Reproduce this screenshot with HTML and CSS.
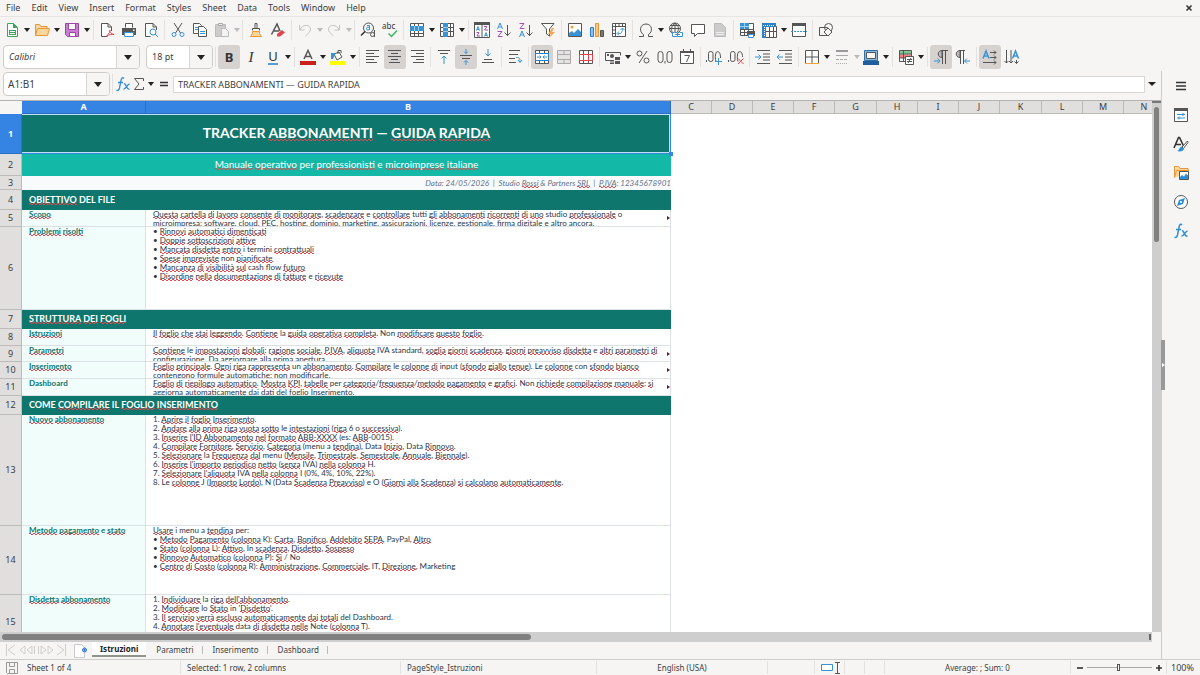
FILE: index.html
```html
<!DOCTYPE html>
<html lang="en">
<head>
<meta charset="utf-8">
<title>Tracker Abbonamenti</title>
<link rel="stylesheet" href="styles.css">
</head>
<body>
<nav class="menubar">
  <button>File</button><button>Edit</button><button>View</button><button>Insert</button><button>Format</button><button>Styles</button><button>Sheet</button><button>Data</button><button>Tools</button><button>Window</button><button>Help</button>
  <button class="close" aria-label="Close document"><svg viewBox="0 0 8 8"><path class="k2" d="M1.5 1.5l5 5M6.500 1.500l-5 5"/></svg></button>
</nav>

<div class="toolbar" role="toolbar" aria-label="Standard">
  <button aria-label="New"><svg viewBox="0 0 16 16"><path fill="#fff" stroke="#3fa35b" d="M3.500 1.500h6l4 4v9h-10z"/><path fill="#3fa35b" d="M9 1v5h5zM5 8h7v5H5z"/><path stroke="#fff" d="M6 9.500h5M6 11.500h5"/></svg></button><button class="drop" aria-label="New options"></button>
  <button aria-label="Open"><svg viewBox="0 0 16 16"><path fill="#fbd69a" stroke="#e8963a" d="M1.500 13.500v-11h4l1.500 2h6v2.500M1.500 13.500l2-7h12l-2 7z"/></svg></button><button class="drop" aria-label="Open recent"></button>
  <button aria-label="Save"><svg viewBox="0 0 16 16"><path fill="#c77fd0" stroke="#9a45a6" d="M1.500 1.500h13v13h-11l-2-2z"/><path fill="#fff" stroke="#9a45a6" d="M4.500 1.500h7v6h-7zM5.500 10.500h6v4h-6z"/></svg></button><button class="drop" aria-label="Save options"></button>
  <span class="sep"></span>
  <button aria-label="Export as PDF"><svg viewBox="0 0 16 16"><path fill="#fff" class="k" d="M12.500 9V5l-3.500-3.500H2.500v13h6M9 1.500V5h3.500"/><path class="r" d="M7.500 14c3-2 4-6 3.500-6s-1 3 4 4.500c-2-.5-5 0-7.500 1.500"/></svg></button>
  <button aria-label="Print"><svg viewBox="0 0 16 16"><path fill="#555" d="M1 6h14v7H1z"/><path class="k" fill="#fff" d="M4.500 5.500v-4h7v4"/><path stroke="#3a93d4" fill="#fff" d="M3.500 10.500h9v4h-9z"/><path fill="#fff" d="M12 7.500h1.500V9H12z"/></svg></button>
  <button aria-label="Print Preview"><svg viewBox="0 0 16 16"><path fill="#fff" class="k" d="M13.500 8V5L10 1.500H2.500v13h5M10 1.500V5h3.500"/><circle class="b" cx="10" cy="10" r="3"/><path class="b" d="M12 12l3 3"/></svg></button>
  <span class="sep"></span>
  <button aria-label="Cut"><svg viewBox="0 0 16 16"><path class="k" d="M4 1l6.500 10M12 1L5.500 11"/><circle class="b" cx="4" cy="12.500" r="2"/><circle class="b" cx="12" cy="12.500" r="2"/></svg></button>
  <button aria-label="Copy"><svg viewBox="0 0 16 16"><path fill="#fff" class="k" d="M1.500 1.500h6l2 2v8h-8z"/><path fill="#fff" class="k" d="M6.500 4.500h5l3 3v7h-8z"/><path class="b" d="M3 5.500h3M3 7.500h3M8 9.500h5M8 11.500h5"/></svg></button>
  <button aria-label="Paste" disabled><svg viewBox="0 0 16 16"><path fill="#ccc" stroke="#bbb" d="M1.500 2.500h10v12h-10z"/><path stroke="#aaa" fill="#eee" d="M4.500 1.500h4v2h-4z"/><path fill="#f4f4f4" stroke="#bbb" d="M7.500 6.500h4l3 3v5h-7z"/></svg></button><button class="drop dim" aria-label="Paste options" disabled></button>
  <span class="sep"></span>
  <button aria-label="Clone Formatting"><svg viewBox="0 0 16 16"><path class="k" fill="#fff" d="M7 6.500V1.500h2v5M4.500 8.500v-2h7v2"/><path fill="#fbd69a" stroke="#e8963a" d="M4.500 9.500h7v2l2 3h-11l2-3z"/></svg></button>
  <button aria-label="Clear Direct Formatting"><svg viewBox="0 0 16 16"><path class="k" stroke-width="1.500" d="M1.500 12.500L7 2l3 7M4 9h5"/><path fill="#e0454b" d="M7 12l5-4 3 2.500-5 4-3 0z"/></svg></button>
  <span class="sep"></span>
  <button aria-label="Undo" disabled><svg viewBox="0 0 16 16"><path class="g" d="M2.500 3v5h5M3 8c2-6 10-6 10.500-1 0 3-2 4-5 7"/></svg></button><button class="drop dim" aria-label="Undo list" disabled></button>
  <button aria-label="Redo" disabled><svg viewBox="0 0 16 16"><path class="g" d="M13.500 3v5h-5M13 8C11 2 3 2 2.500 7c0 3 2 4 5 7"/></svg></button><button class="drop dim" aria-label="Redo list" disabled></button>
  <span class="sep"></span>
  <button aria-label="Find and Replace"><svg viewBox="0 0 16 16"><circle class="k" cx="8.500" cy="6" r="5"/><path class="k2" d="M5 9.500L1 13.500"/><circle class="b" cx="8" cy="6.500" r="1.500"/><path class="b" d="M7 3.500h2.500V8"/><circle class="k" cx="12.500" cy="12.500" r="2" fill="#f6f5f4"/><path class="k" d="M14.500 8v7"/></svg></button>
  <button aria-label="Spelling"><svg viewBox="0 0 16 16"><text class="tk" x="0" y="7">abc</text><path stroke="#3fb568" stroke-width="1.500" fill="none" d="M6.500 11.500l3 3 5.500-6"/></svg></button>
  <span class="sep"></span>
  <button aria-label="Row"><svg viewBox="0 0 16 16"><path fill="#fff" class="k" d="M1.500 1.500h13v13h-13zM5.500 1v13M9.500 1v13M1 11.500h14"/><path fill="#3a93d4" d="M1 4h14v5H1z"/><path stroke="#9cd0f0" d="M5.500 4v5M9.500 4v5"/></svg></button><button class="drop" aria-label="Row options"></button>
  <button aria-label="Column"><svg viewBox="0 0 16 16"><path fill="#fff" class="k" d="M1.500 1.500h13v13h-13zM1 5.500h14M1 9.500h14M11.500 1v14"/><path fill="#3a93d4" d="M4 1h5v14H4z"/><path stroke="#9cd0f0" d="M4 5.500h5M4 9.500h5"/></svg></button><button class="drop" aria-label="Column options"></button>
  <span class="sep"></span>
  <button aria-label="Sort"><svg viewBox="0 0 16 16"><path fill="#fff" class="k" d="M.5 1.500h15v14H.5zM8 2v13"/><path fill="#555" d="M0 0h16v3H0z"/><path class="b" d="M2.500 8.500l1.500-4 1.500 4M3 7.500h2M10.500 14.500l1.500-4 1.500 4M11 13.500h2"/><path class="p" d="M2.500 10.500H5L3 14h3M10 4.500h3L10.500 8H14"/></svg></button>
  <button aria-label="Sort Ascending"><svg viewBox="0 0 16 16"><path class="b" d="M1.500 7L4 1l2.500 6M2.500 5h3"/><path class="p" d="M1.500 9.500H6L2 14.500h4.500"/><path class="k" d="M11.500 3v11M8.500 10.500l3 3 3-3"/></svg></button>
  <button aria-label="Sort Descending"><svg viewBox="0 0 16 16"><path class="b" d="M1.500 15L4 9l2.500 6M2.500 13h3"/><path class="p" d="M1.500 1.500H6L2 6.500h4.500"/><path class="k" d="M11.500 3v11M8.500 10.500l3 3 3-3"/></svg></button>
  <button aria-label="AutoFilter"><svg viewBox="0 0 16 16"><path class="k" fill="#fff" d="M1.500 1.500h12.500L9.500 7v7L6.500 12V7z"/><path fill="#f3a64c" d="M12 6l-4 6h3l-2 4 6-6h-3l2-4z"/></svg></button>
  <span class="sep"></span>
  <button aria-label="Insert Image"><svg viewBox="0 0 16 16"><path fill="#fff" class="k" d="M1.500 1.500h13v13h-13z"/><circle fill="#f0a33c" cx="5" cy="5" r="1.500"/><path fill="#3a93d4" d="M2 14v-3l3-2 2 2 4-4 3 3v4z"/></svg></button>
  <button aria-label="Insert Chart"><svg viewBox="0 0 16 16"><path fill="#8cc4ee" stroke="#2f7fc4" d="M1.500 5.500h3v9h-3z"/><path fill="#fbc67c" stroke="#e8963a" d="M6.500 1.500h3v13h-3z"/><path fill="#777" stroke="#555" d="M11.500 8.500h3v6h-3z"/></svg></button>
  <button aria-label="Insert Pivot Table"><svg viewBox="0 0 16 16"><path fill="#fff" class="k" d="M1.500 1.500h13v13h-13zM1.500 4.500h13M4.500 1.500v13M8 1.500v3M11.500 1.500v3M1.500 8h3M1.500 11.500h3"/><path class="b" d="M6.500 11.500c4 1 5-2 5-5M9.500 8l2-2 2 2M8 9.500l-2 2 2 2"/></svg></button>
  <span class="sep"></span>
  <button aria-label="Special Character"><svg viewBox="0 0 16 16"><path class="k" d="M1 14.500h4.500v-2C1 10 1.500 2 8 2s7 8 2.500 10.500v2H15"/></svg></button><button class="drop" aria-label="Special characters"></button>
  <button aria-label="Insert Hyperlink"><svg viewBox="0 0 16 16"><circle class="k" cx="7" cy="6.500" r="5.500"/><path class="k" d="M1.500 6.500h11M7 1v11M2.500 3.500h9M4.500 11c-1.500-3-1.500-7 2.500-10 4 3 4 6 2.500 9"/><path class="b" fill="#fff" d="M6.500 10.500h3v4h-5v-4zM11.500 10.500h3v4h-5M7 12.500h5"/></svg></button>
  <button aria-label="Insert Comment"><svg viewBox="0 0 16 16"><path class="k" fill="#fff" d="M1.500 2.500h13v9h-7l-3 3v-3h-3z"/></svg></button>
  <button aria-label="Headers and Footers" disabled><svg viewBox="0 0 16 16"><path fill="#ccc" stroke="#bbb" d="M2.500 1.500h7l4 4v9h-11z"/><path stroke="#eee" d="M4 10.500h8M4 12.500h8"/></svg></button>
  <span class="sep"></span>
  <button aria-label="Define Print Area"><svg viewBox="0 0 16 16"><path fill="#fff" class="k" d="M1.500 1.500h13v12h-13zM1 7.500h13M1 10.500h13M5.500 1v13M9.500 1v13"/><path fill="#3a93d4" d="M1 1h9v6H1z"/><path stroke="#9cd0f0" d="M1 4.500h9M5.500 1v6"/><path fill="#555" d="M8 9h8v5H8z"/><path fill="#fff" stroke="#3a93d4" d="M9.500 12.500h5v3h-5z"/></svg></button>
  <button aria-label="Freeze Rows and Columns"><svg viewBox="0 0 16 16"><path fill="#fff" class="k" d="M4.500 4.500h11v11h-11zM4 9.500h12M8.500 4v12M12.500 4v12"/><path fill="#2f7fc4" d="M1 1h14v4H5v11H1z"/><path stroke="#fff" stroke-dasharray="1 1" d="M2 3.500h12M3.500 5v10"/></svg></button><button class="drop" aria-label="Freeze options"></button>
  <button aria-label="Split Window"><svg viewBox="0 0 16 16"><path fill="#fff" class="k" d="M1.500 1.500h13v13h-13z"/><path fill="#555" d="M1 1h14v3H1z"/><path class="b" stroke-dasharray="2 1" d="M0 9.500h16"/></svg></button>
  <span class="sep"></span>
  <button aria-label="Show Draw Functions"><svg viewBox="0 0 16 16"><path class="k" d="M1.500 5.500h8v8h-8z"/><circle class="k" cx="10.500" cy="5.500" r="4"/><path class="k" fill="#f6f5f4" d="M10 6l4 4-4 4-4-4z"/></svg></button>
</div>

<div class="toolbar formatting" role="toolbar" aria-label="Formatting">
  <div class="combo font"><input type="text" value="Calibri" aria-label="Font name"><button aria-label="Font list"></button></div>
  <div class="combo size"><input type="text" value="18 pt" aria-label="Font size"><button aria-label="Size list"></button></div>
  <span class="sep"></span>
  <button class="on letter" aria-label="Bold"><b>B</b></button>
  <button class="letter" aria-label="Italic"><i>I</i></button>
  <button class="letter" aria-label="Underline"><span class="under">U</span></button><button class="drop" aria-label="Underline options"></button>
  <span class="sep"></span>
  <button aria-label="Font Color"><svg viewBox="0 0 16 16"><path class="k" stroke-width="1.500" d="M4 10L8 1.500 12 10M5.500 7.500h5"/><path fill="#c9211e" d="M0 12h16v4H0z"/></svg></button><button class="drop" aria-label="Font color options"></button>
  <button aria-label="Background Color"><svg viewBox="0 0 16 16"><path fill="#fff" class="k" d="M4 5l5-2 3 5-5 3zM8 5V1.500h3V4"/><path fill="#3a93d4" d="M1 4h4v2L3 10H1z"/><path fill="#ff0" d="M0 12h16v4H0z"/></svg></button><button class="drop" aria-label="Background color options"></button>
  <span class="sep"></span>
  <button aria-label="Align Left"><svg viewBox="0 0 16 16"><path class="k" d="M1 1.500h13M1 4.500h8M1 7.500h13M1 10.500h8M1 13.500h11"/></svg></button>
  <button class="on" aria-label="Center Horizontally"><svg viewBox="0 0 16 16"><path class="k" d="M1 1.500h13M4 4.500h7M1 7.500h13M4 10.500h7M2 13.500h11"/></svg></button>
  <button aria-label="Align Right"><svg viewBox="0 0 16 16"><path class="k" d="M2 1.500h13M7 4.500h8M2 7.500h13M7 10.500h8M4 13.500h11"/></svg></button>
  <span class="sep"></span>
  <button aria-label="Align Top"><svg viewBox="0 0 16 16"><path class="k" d="M2 1.500h12M4 4.500h8"/><path class="b" d="M8 15V8M5.500 9.500L8 7l2.500 2.500"/></svg></button>
  <button class="on" aria-label="Center Vertically"><svg viewBox="0 0 16 16"><path class="k" d="M2 6.500h12M4 9.500h8"/><path class="b" d="M8 0v4.500M6 2.500l2 2 2-2M8 16v-4.500M6 13.500l2-2 2 2"/></svg></button>
  <button aria-label="Align Bottom"><svg viewBox="0 0 16 16"><path class="k" d="M4 10.500h8M2 13.500h12"/><path class="b" d="M8 0v6.500M5.500 4.500L8 7l2.500-2.500"/></svg></button>
  <span class="sep"></span>
  <button aria-label="Wrap Text"><svg viewBox="0 0 16 16"><path class="k" d="M2 1.500h11M2 5.500h9M2 9.500h6M2 13.500h7"/><path class="b" d="M9 8.500c4 0 4 1 4 4.500M11 11l2 2.500L15 11"/></svg></button>
  <span class="sep"></span>
  <button class="on" aria-label="Merge and Center Cells"><svg viewBox="0 0 16 16"><path class="k" fill="#fff" d="M1.500 1.500h13v13h-13zM1 4.500h14M1 11.500h14M5.500 1v14M10.500 1v14"/><path fill="#fff" stroke="#2f7fc4" d="M1.500 4.500h13v7h-13z"/><path class="b" d="M3 8h4M9 8h4M5.500 6.500L7 8 5.500 9.500M10.500 6.500L9 8l1.500 1.500"/></svg></button>
  <button aria-label="Merge Cells" disabled><svg viewBox="0 0 16 16"><path stroke="#aaa" fill="#e4e4e4" d="M1.500 1.500h13v13h-13zM1 5.500h14M1 10.500h14M8 1v4M8 11v4"/></svg></button>
  <button aria-label="Split Cells"><svg viewBox="0 0 16 16"><path class="k" fill="#fff" d="M1.500 1.500h13v13h-13zM5.500 1v14M10.500 1v14"/><path class="r" fill="none" d="M1.500 5.500h13v6h-13zM5.500 6v5M10.500 6v5"/></svg></button>
  <span class="sep"></span>
  <button aria-label="Format as Currency"><svg viewBox="0 0 16 16"><path class="k" d="M8 11.500H.5v-8h15v3"/><circle fill="#555" cx="7" cy="7" r="2"/><path fill="#555" d="M5 11h4v4H5zM10 8h5v7h-5zM2 5h2v2H2z"/><path stroke="#f6f5f4" d="M9.500 8v7M10 11.500h5M5 13h4"/></svg></button><button class="drop" aria-label="Currency options"></button>
  <button aria-label="Format as Percent"><svg viewBox="0 0 16 16"><circle class="k" cx="4.500" cy="4.500" r="2.500"/><circle class="k" cx="11.500" cy="11.500" r="2.500"/><path class="k" d="M12 2L4 14"/></svg></button>
  <button aria-label="Format as Number"><svg viewBox="0 0 16 16"><rect class="k" x="1" y="2.500" width="5" height="11" rx="2.500"/><rect class="k" x="10" y="2.500" width="5" height="11" rx="2.500"/><path class="k" d="M8 12v2.500"/></svg></button>
  <button aria-label="Format as Date"><svg viewBox="0 0 16 16"><path class="k" fill="#fff" d="M1.500 2.500h13v12h-13zM4.500 0v3M11.500 0v3"/><path fill="#555" d="M1 2h14v2H1z"/><path class="k" d="M5.500 6.500h5L7.500 13"/></svg></button>
  <span class="sep"></span>
  <button aria-label="Add Decimal Place"><svg viewBox="0 0 16 16"><rect class="k" x="2.500" y="2.500" width="4.500" height="10" rx="2"/><path class="k" d="M.5 11v2M10 12.500c-1-2-1-8 .5-9.500 2-1 4 0 4 6"/><path class="b" d="M9 12.500h7M12.500 9v7"/></svg></button>
  <button aria-label="Delete Decimal Place"><svg viewBox="0 0 16 16"><rect class="k" x="2.500" y="2.500" width="4.500" height="10" rx="2"/><path class="k" d="M.5 11v2M10 12.500c-1-2-1-8 .5-9.500 2-1 4 0 4 5"/><path class="r" d="M10 9.500l5.500 5.500M15.500 9.500L10 15"/></svg></button>
  <span class="sep"></span>
  <button aria-label="Increase Indent"><svg viewBox="0 0 16 16"><path class="k" d="M2 1.500h13M8 5h7M8 8h7M8 11h7M2 14.500h13"/><path class="b" d="M0 8h6M3.500 5.500L6 8l-2.500 2.500"/></svg></button>
  <button aria-label="Decrease Indent"><svg viewBox="0 0 16 16"><path class="k" d="M2 1.500h13M8 5h7M8 8h7M8 11h7M2 14.500h13"/><path class="b" d="M0 8h6M2.500 5.500L0 8l2.500 2.500"/></svg></button>
  <span class="sep"></span>
  <button aria-label="Borders"><svg viewBox="0 0 16 16"><path class="k" fill="#fff" d="M1.500 14.500v-13h13v13M8 1.500v13M1.500 8h13"/><path stroke="#f0a33c" d="M1 14.500h14"/></svg></button><button class="drop" aria-label="Border options"></button>
  <button aria-label="Border Style" disabled><svg viewBox="0 0 16 16"><path stroke="#999" stroke-width="2" d="M2 2h12"/><path stroke="#aaa" d="M2 6.500h12"/><path stroke="#aaa" stroke-dasharray="3 1" d="M2 10.500h12"/><path stroke="#aaa" stroke-dasharray="1 1" d="M2 14.500h12"/></svg></button><button class="drop dim" aria-label="Border style options" disabled></button>
  <button aria-label="Border Color"><svg viewBox="0 0 16 16"><path fill="#8ab8dc" stroke="#2f6fa8" d="M1.500 1.500h13v10h-13z"/><path fill="#f6f5f4" class="k" d="M3.500 3.500h9v6h-9z"/><path fill="#1f5f9f" d="M0 12h16v4H0z"/></svg></button><button class="drop" aria-label="Border color options"></button>
  <span class="sep"></span>
  <button aria-label="Conditional Formatting"><svg viewBox="0 0 16 16"><path fill="#fff" class="k" d="M1.500 1.500h12v11h-12z"/><path fill="#7fc894" d="M2 2h11v3H2z"/><path fill="#ee8080" d="M2 5.500h11V9H2z"/><path class="k" d="M5.500 1.500v11M1.500 5h12M1.500 9h12"/><path fill="#fff" class="k" d="M7.500 7.500h8v8h-8zM9 10.500h5M9 12.500h5M13 9l-3 5"/></svg></button><button class="drop" aria-label="Conditional options"></button>
  <span class="sep"></span>
  <button class="on" aria-label="Left-To-Right"><svg viewBox="0 0 16 16"><path fill="#bbb" class="k" d="M9 8.500C4 8.500 4 1.500 9 1.500z"/><path class="k" d="M15 1.500H8.500M9.500 1.500V15M12.500 1.500V15"/><path class="b" d="M1 12h5.500M4.500 9.500L7 12l-2.500 2.500"/></svg></button>
  <button aria-label="Right-To-Left"><svg viewBox="0 0 16 16"><path fill="#bbb" class="k" d="M5 8.500C0 8.500 0 1.500 5 1.500z"/><path class="k" d="M10 1.500H4.500M5.500 1.500V15M8.500 1.500V15"/><path class="b" d="M9.500 12H15M12 9.500L9.500 12l2.500 2.500"/></svg></button>
  <span class="sep"></span>
  <button class="on" aria-label="Text direction left to right"><svg viewBox="0 0 16 16"><path class="b" stroke-width="1.500" d="M1 9.500L4 2l3 7.500M2 7h4"/><path class="k" d="M8 3.500h6M12 1.500l2 2-2 2M8 8.500h6M12 6.500l2 2-2 2M1 13.500h13M12 11.500l2 2-2 2"/></svg></button>
  <button aria-label="Text direction top to bottom"><svg viewBox="0 0 16 16"><path class="b" stroke-width="1.500" d="M8.500 9.500l3-7.500 3 7.500M9.500 7h4"/><path class="k" d="M2.500 1v13M.5 12l2 2 2-2M7 1v13M5 12l2 2 2-2M12.500 11v3.500M10.500 12.500l2 2 2-2"/></svg></button>
</div>

<div class="workspace">
  <main class="document">
    <div class="formulabar">
      <div class="combo name"><input type="text" value="A1:B1" aria-label="Name box"><button aria-label="Named ranges"></button></div>
      <span class="sep"></span>
      <button class="fx" aria-label="Function Wizard"><svg viewBox="0 0 16 16"><path stroke="#2f8fd4" stroke-width="1.300" fill="none" d="M9 2.500C7.500 1 6.500 2 6 4.500L4.500 12c-.5 2-1.500 3-3 2M3 6.500h5M9 8c2-1.500 2 6 5.500 5M14.500 8c-2 0-4 5.500-6 5"/></svg></button>
      <button class="sigma" aria-label="Select Function"><svg viewBox="0 0 12 16"><path class="k" d="M10.500 5V2.500h-9L6 8l-4.500 5.500h9V11"/></svg></button>
      <button class="drop" aria-label="Function options"></button>
      <button class="equals" aria-label="Formula"><svg viewBox="0 0 10 16"><path class="k2" d="M1 6.500h8M1 9.500h8"/></svg></button>
      <input class="formula" type="text" value="TRACKER ABBONAMENTI — GUIDA RAPIDA" aria-label="Input line">
      <button class="drop expand" aria-label="Expand Formula Bar"></button>
    </div>

    <div class="grid">
      <div class="cells">
        <table>
          <colgroup><col class="c-head"><col class="c-a"><col class="c-b"><col class="c-n" span="4"><col class="c-w"><col class="c-n" span="3"><col class="c-w"><col class="c-n" span="3"></colgroup>
          <thead><tr><td class="corner"></td><th class="sel">A</th><th class="sel">B</th><th>C</th><th>D</th><th>E</th><th>F</th><th>G</th><th>H</th><th>I</th><th>J</th><th>K</th><th>L</th><th>M</th><th>N</th></tr></thead>
          <tbody>
            <tr style="height:40px"><th class="sel">1</th><td colspan="2" class="title">TRACKER <u>ABBONAMENTI</u> — <u>GUIDA</u> <u>RAPIDA</u></td><td colspan="12"></td></tr>
            <tr style="height:22px"><th>2</th><td colspan="2" class="subtitle"><u>Manuale</u> <u>operativo</u> per <u>professionisti</u> e <u>microimprese</u> <u>italiane</u></td><td colspan="12"></td></tr>
            <tr style="height:14px"><th>3</th><td colspan="2" class="meta">Data: 24/05/2026 &nbsp;|&nbsp; Studio <u>Rossi</u> &amp; Partners <u>SRL</u> &nbsp;|&nbsp; <u>P.IVA</u>: 12345678901</td><td colspan="12"></td></tr>
            <tr style="height:20px"><th>4</th><td colspan="2" class="section"><u>OBIETTIVO</u> DEL FILE</td><td colspan="12"></td></tr>
            <tr style="height:17px"><th>5</th><td class="key"><u>Scopo</u></td><td class="val more"><div style="height:16px"><u>Questa</u> <u>cartella</u> <u>di</u> <u>lavoro</u> <u>consente</u> <u>di</u> <u>monitorare</u>, <u>scadenzare</u> e <u>controllare</u> tutti <u>gli</u> <u>abbonamenti</u> <u>ricorrenti</u> <u>di</u> <u>uno</u> studio <u>professionale</u> o<br>microimpresa: software, cloud, PEC, hosting, dominio, marketing, assicurazioni, licenze, gestionale, firma digitale e altro ancora.</div></td><td colspan="12"></td></tr>
            <tr style="height:83px"><th>6</th><td class="key"><u>Problemi</u> <u>risolti</u></td><td class="val"><div>• <u>Rinnovi</u> <u>automatici</u> <u>dimenticati</u><br>• <u>Doppie</u> <u>sottoscrizioni</u> <u>attive</u><br>• <u>Mancata</u> <u>disdetta</u> <u>entro</u> i termini <u>contrattuali</u><br>• <u>Spese</u> <u>impreviste</u> non <u>pianificate</u><br>• <u>Mancanza</u> <u>di</u> <u>visibilità</u> <u>sul</u> cash flow <u>futuro</u><br>• <u>Disordine</u> <u>nella</u> <u>documentazione</u> <u>di</u> <u>fatture</u> e <u>ricevute</u></div></td><td colspan="12"></td></tr>
            <tr style="height:19px"><th>7</th><td colspan="2" class="section"><u>STRUTTURA</u> <u>DEI</u> <u>FOGLI</u></td><td colspan="12"></td></tr>
            <tr style="height:17px"><th>8</th><td class="key"><u>Istruzioni</u></td><td class="val"><div><u>Il</u> <u>foglio</u> <u>che</u> <u>stai</u> <u>leggendo</u>. <u>Contiene</u> la <u>guida</u> <u>operativa</u> <u>completa</u>. Non <u>modificare</u> <u>questo</u> <u>foglio</u>.</div></td><td colspan="12"></td></tr>
            <tr style="height:16px"><th>9</th><td class="key"><u>Parametri</u></td><td class="val more"><div style="height:15px"><u>Contiene</u> le <u>impostazioni</u> <u>globali</u>: <u>ragione</u> <u>sociale</u>, <u>P.IVA</u>, <u>aliquota</u> IVA standard, <u>soglia</u> <u>giorni</u> <u>scadenza</u>, <u>giorni</u> <u>preavviso</u> <u>disdetta</u> e <u>altri</u> <u>parametri</u> <u>di</u><br>configurazione. Da aggiornare alla prima apertura.</div></td><td colspan="12"></td></tr>
            <tr style="height:17px"><th>10</th><td class="key"><u>Inserimento</u></td><td class="val more"><div style="height:16px"><u>Foglio</u> <u>principale</u>. <u>Ogni</u> <u>riga</u> <u>rappresenta</u> un <u>abbonamento</u>. <u>Compilare</u> le <u>colonne</u> <u>di</u> input (<u>sfondo</u> <u>giallo</u> <u>tenue</u>). Le <u>colonne</u> con <u>sfondo</u> <u>bianco</u><br>contengono formule automatiche: non modificarle.</div></td><td colspan="12"></td></tr>
            <tr style="height:17px"><th>11</th><td class="key">Dashboard</td><td class="val more"><div style="height:16px"><u>Foglio</u> <u>di</u> <u>riepilogo</u> <u>automatico</u>. <u>Mostra</u> <u>KPI</u>, <u>tabelle</u> per <u>categoria</u>/<u>frequenza</u>/<u>metodo</u> <u>pagamento</u> e <u>grafici</u>. Non <u>richiede</u> <u>compilazione</u> <u>manuale</u>: <u>si</u><br>aggiorna automaticamente dai dati del foglio Inserimento.</div></td><td colspan="12"></td></tr>
            <tr style="height:19px"><th>12</th><td colspan="2" class="section">COME <u>COMPILARE</u> IL <u>FOGLIO</u> <u>INSERIMENTO</u></td><td colspan="12"></td></tr>
            <tr style="height:111px"><th>13</th><td class="key"><u>Nuovo</u> <u>abbonamento</u></td><td class="val"><div>1. <u>Aprire</u> <u>il</u> <u>foglio</u> <u>Inserimento</u>.<br>2. <u>Andare</u> <u>alla</u> <u>prima</u> <u>riga</u> <u>vuota</u> <u>sotto</u> le <u>intestazioni</u> (<u>riga</u> 6 o <u>successiva</u>).<br>3. <u>Inserire</u> <u>l'ID</u> <u>Abbonamento</u> <u>nel</u> <u>formato</u> <u>ABB-XXXX</u> (es: <u>ABB</u>-0015).<br>4. <u>Compilare</u> <u>Fornitore</u>, <u>Servizio</u>, <u>Categoria</u> (menu a <u>tendina</u>), Data <u>Inizio</u>, Data <u>Rinnovo</u>.<br>5. <u>Selezionare</u> la <u>Frequenza</u> <u>dal</u> menu (<u>Mensile</u>, <u>Trimestrale</u>, <u>Semestrale</u>, <u>Annuale</u>, <u>Biennale</u>).<br>6. <u>Inserire</u> <u>l'importo</u> <u>periodico</u> <u>netto</u> (<u>senza</u> IVA) <u>nella</u> <u>colonna</u> H.<br>7. <u>Selezionare</u> <u>l'aliquota</u> IVA <u>nella</u> <u>colonna</u> I (0%, 4%, 10%, 22%).<br>8. Le <u>colonne</u> J (<u>Importo</u> <u>Lordo</u>), N (Data <u>Scadenza</u> <u>Preavviso</u>) e O (<u>Giorni</u> <u>alla</u> <u>Scadenza</u>) <u>si</u> <u>calcolano</u> <u>automaticamente</u>.</div></td><td colspan="12"></td></tr>
            <tr style="height:69px"><th>14</th><td class="key"><u>Metodo</u> <u>pagamento</u> e <u>stato</u></td><td class="val"><div><u>Usare</u> i menu a <u>tendina</u> per:<br>• <u>Metodo</u> <u>Pagamento</u> (<u>colonna</u> K): <u>Carta</u>, <u>Bonifico</u>, <u>Addebito</u> <u>SEPA</u>, PayPal, <u>Altro</u><br>• <u>Stato</u> (<u>colonna</u> L): <u>Attivo</u>, In <u>scadenza</u>, <u>Disdetto</u>, <u>Sospeso</u><br>• <u>Rinnovo</u> <u>Automatico</u> (<u>colonna</u> P): <u>Sì</u> / No<br>• <u>Centro</u> <u>di</u> <u>Costo</u> (<u>colonna</u> R): <u>Amministrazione</u>, <u>Commerciale</u>, IT, <u>Direzione</u>, Marketing</div></td><td colspan="12"></td></tr>
            <tr style="height:55px"><th>15</th><td class="key"><u>Disdetta</u> <u>abbonamento</u></td><td class="val"><div>1. <u>Individuare</u> la <u>riga</u> <u>dell'abbonamento</u>.<br>2. <u>Modificare</u> lo <u>Stato</u> in '<u>Disdetto</u>'.<br>3. <u>Il</u> <u>servizio</u> <u>verrà</u> <u>escluso</u> <u>automaticamente</u> <u>dai</u> <u>totali</u> del Dashboard.<br>4. <u>Annotare</u> <u>l'eventuale</u> data <u>di</u> <u>disdetta</u> <u>nelle</u> Note (<u>colonna</u> T).</div></td><td colspan="12"></td></tr>
          </tbody>
        </table>
      </div>
      <div class="vscroll"><span class="thumb"></span></div>
    </div>
    <div class="hscroll"><span class="thumb"></span><span class="grip"></span></div>

    <div class="tabs">
      <svg class="tabnav" viewBox="0 0 62 12"><path d="M1.500 0v12M10 1L3 6l7 5M20 2l-5 4 5 4zM27 2l-5 4 5 4zM36 2l5 4-5 4zM43 2l5 4-5 4zM52 1l7 5-7 5M60.500 0v12M29.500 2v8M33.500 2v8"/></svg>
      <button class="addtab" aria-label="Add Sheet"><svg viewBox="0 0 14 14"><path fill="#fff" stroke="#ccc" d="M.5.5h7l3 3v10H.5z"/><circle fill="#fff" stroke="#2f6fc4" cx="10.500" cy="6" r="2"/><path stroke="#2f6fc4" d="M9 6h3M10.500 4.500v3"/></svg></button>
      <button class="tab current">Istruzioni</button><button class="tab">Parametri</button><button class="tab">Inserimento</button><button class="tab">Dashboard</button>
    </div>
  </main>

  <aside class="sidebar">
    <button class="handle" aria-label="Hide Sidebar"></button>
    <button aria-label="Sidebar Settings"><svg viewBox="0 0 16 16"><path class="k2" d="M3 4.500h10M3 8h10M3 11.500h10"/></svg></button>
    <button aria-label="Properties"><svg viewBox="0 0 16 16"><path class="k" fill="#fff" d="M1.500 1.500h13v13h-13z"/><path fill="#555" d="M1 1h14v3H1z"/><path class="b" d="M4 7.500h8M10 6v3M4 11h8M6 9.500v3"/></svg></button>
    <button aria-label="Styles"><svg viewBox="0 0 16 16"><path class="k2" d="M1 12L5.500 1.500h1L11 11M3 8.500h5"/><path class="k" fill="#fff" d="M14.500 5L9 11l1.500 1.500 4.500-6z"/><path fill="#2f8fd4" d="M8.500 10.500l2.500 2.500c-1 2.500-4 3-7 2 2.500-.5 2-3.500 4.500-4.500z"/></svg></button>
    <button aria-label="Gallery"><svg viewBox="0 0 16 16"><path fill="#fbd69a" stroke="#e8963a" d="M1.500 12.500v-11h4l1.500 2h8v2M1.500 12.500l2-7h12v3"/><path fill="#fff" class="k" d="M6.500 6.500h9v8h-9z"/><path fill="#2f8fd4" d="M7 14v-2l2-2 2 1.500 2-3 2 2V14z"/></svg></button>
    <button aria-label="Navigator"><svg viewBox="0 0 16 16"><circle class="k" fill="#fff" cx="8" cy="8" r="6.500"/><path fill="#2f8fd4" d="M12 4l-2 6-6 2 2-6z"/><circle fill="#fff" cx="8" cy="8" r="1"/></svg></button>
    <button aria-label="Functions"><svg viewBox="0 0 16 16"><path stroke="#2f8fd4" stroke-width="1.500" fill="none" d="M9 2C7.500 0 6.500 2 6 4.500L4.500 12c-.5 2-1.500 3-3 2M3 6.500h5M9 8c2-1.500 2 6 5.500 5M14.500 8c-2 0-4 5.500-6 5"/></svg></button>
  </aside>
</div>

<footer class="status">
  <div class="cell first"><svg viewBox="0 0 12 12"><path fill="none" stroke="#999" d="M.5.500h11v11h-10l-1-1zM3.500.500v4h5v-4M3.500 11.500v-4h5v4"/></svg>Sheet 1 of 4</div>
  <div class="cell">Selected: 1 row, 2 columns</div>
  <div class="cell">PageStyle_Istruzioni</div>
  <div class="cell mid">English (USA)</div>
  <div class="cell"></div>
  <div class="cell"><svg class="mode" viewBox="0 0 19 12"><path fill="#fff" stroke="#3a93d4" d="M.5 2.500h11v6H.5z"/><path class="k" d="M14 .5h5M14 11.500h5M16.500.500v11"/></svg></div>
  <div class="cell"></div>
  <div class="cell"></div>
  <div class="cell mid">Average: ; Sum: 0</div>
  <div class="cell zoom"><button aria-label="Zoom out"><svg viewBox="0 0 8 8"><path class="k2" d="M1 4h6"/></svg></button><input type="range" min="0" max="100" value="48" aria-label="Zoom"><button aria-label="Zoom in"><svg viewBox="0 0 8 8"><path class="k2" d="M1 4h6M4 1v6"/></svg></button></div>
  <div class="cell mid percent">100%</div>
</footer>
</body>
</html>
```

FILE: styles.css
```css
* { box-sizing: border-box; }

body {
  margin: 0;
  height: 100vh;
  display: flex;
  flex-direction: column;
  overflow: hidden;
  background: #f6f5f4;
  color: #3d3d3d;
  font: 9px/12px "Noto Sans", sans-serif;
}

button, input { font: inherit; color: inherit; margin: 0; padding: 0; border: 0; background: none; }
svg { display: block; fill: none; overflow: visible; }

.k { stroke: #555; }
.k2 { stroke: #333; stroke-width: 1.6; }
.b { stroke: #3a93d4; }
.p { stroke: #a650b0; }
.r { stroke: #e0454b; }
.g { stroke: #c4c4c4; }
svg text { font: 8px "Noto Sans", sans-serif; }
.tk { fill: #333; }

/* menu */
.menubar { display: flex; height: 17px; padding-right: 5px; border-bottom: 1px solid #e6e5e3; }
.menubar button { padding: 0 5px 0 6px; white-space: nowrap; }
.menubar .close { margin-left: auto; padding: 0 2px; }
.close svg { width: 8px; height: 8px; }

/* toolbars */
.toolbar { display: flex; align-items: center; height: 26px; padding-left: 1px; }
.toolbar.formatting { height: 28px; padding-left: 3px; }
.toolbar > button { flex: none; width: 22px; height: 24px; display: flex; align-items: center; justify-content: center; border-radius: 3px; }
.toolbar svg { width: 16px; height: 16px; }
.toolbar > button.on { background: #d5d2cf; }
.toolbar > button.drop { width: 8px; }
.toolbar > button.drop.dim { width: 7px; }
.drop::before, .combo button::before { content: ""; border: 3px solid transparent; border-top: 4px solid #222; border-bottom: 0; }
.drop.dim::before { border-top-color: #bbb; }
.sep { flex: none; width: 1px; height: 20px; margin: 0 2px; background: #e3e1df; }
.toolbar .letter { font-size: 13px; color: #333; }
.letter i { font-family: "Liberation Serif", serif; font-size: 15px; }
.under { border-bottom: 2px solid #5b9bd0; line-height: 13px; }

.combo { display: flex; height: 24px; background: #fff; border: 1px solid #cfccc9; border-radius: 4px; overflow: hidden; }
.combo input { flex: 1; min-width: 0; padding-left: 5px; }
.combo button { width: 23px; display: flex; align-items: center; justify-content: center; background: #f6f5f4; border-left: 1px solid #d8d5d2; }
.combo button::before { border-width: 5px 4px 0; }
.combo.font { width: 137px; margin-right: 6px; font-size: 9px; font-style: italic; }
.combo.size { width: 67px; }
.combo.name { width: 107px; font-size: 10px; }
.combo.name input { padding-left: 4px; }

/* document and sidebar */
.workspace { flex: 1; min-height: 0; display: flex; }
.document { flex: 1; min-width: 0; display: flex; flex-direction: column; border-right: 1px solid #cfcdcb; }

.formulabar { display: flex; align-items: center; height: 29px; padding: 0 3px 3px; }
.formulabar button { display: flex; align-items: center; justify-content: center; }
.formulabar svg { height: 16px; }
.fx { width: 16px; }
.sigma { width: 16px; }
.formulabar .drop { width: 8px; }
.equals { width: 18px; }
.formula { flex: 1; min-width: 0; height: 17px; padding-left: 4px; background: #fff; border: 1px solid #dad8d6; }
.formulabar .drop.expand { width: 13px; }
.expand::before { border-width: 4px 4px 0; }

.grid { flex: 1; min-height: 0; display: flex; border-top: 1px solid #b5b3b1; }
.cells { flex: 1; min-width: 0; overflow: hidden; background: #fff; }

table { table-layout: fixed; width: 1165px; border-collapse: separate; border-spacing: 0; }
.c-head { width: 22px; }
.c-a { width: 124px; }
.c-b { width: 525px; }
.c-n { width: 41px; }
.c-w { width: 42px; }
th, td { padding: 0; overflow: hidden; white-space: nowrap; font-weight: 400; }
th { background: #e0dfde; border-right: 1px solid #bdbbb9; border-bottom: 1px solid #bdbbb9; }
thead th { height: 13px; line-height: 12px; }
th.sel { background: #3584e4; border-color: #2a6fc4; color: #fff; font-weight: 700; }
.corner { background: #f6f5f4; }

tbody td { font-family: Lato, sans-serif; }
.title { position: relative; padding-bottom: 3px; background: #0f766e; color: #fff; text-align: center; font-size: 14px; line-height: 18px; font-weight: 700; overflow: visible; }
.title::before { content: ""; position: absolute; inset: 0 1px 1px 0; border: 1px solid #bfe0ee; border-left: 0; box-shadow: 0 1px #3584e4, 1px 0 #3584e4; }
.title::after { content: ""; position: absolute; z-index: 1; right: -2px; bottom: -2px; width: 4px; height: 4px; background: #3584e4; }
.subtitle { padding-bottom: 2px; background: #14b8a6; color: #fff; text-align: center; font-size: 10px; line-height: 13px; }
.meta { padding-bottom: 1px; background: #f8fafc; color: #64748b; text-align: right; font-size: 8px; line-height: 10px; font-style: italic; }
.section { padding: 0 0 2px 7px; background: #0f766e; color: #fff; font-size: 9px; line-height: 13px; font-weight: 700; }
.key, .val { vertical-align: top; padding: 0 0 0 7px; font-size: 8px; line-height: 9px; border-right: 1px solid #dbe2e6; border-bottom: 1px solid #dbe2e6; }
.key { background: #f0fdfa; color: #0f766e; font-weight: 700; }
.val { position: relative; color: #2b3646; }
.val div { overflow: hidden; }
.more::after { content: ""; position: absolute; right: 0; top: 6px; border: 2px solid transparent; border-left: 3px solid #5a1a22; border-right: 0; }

/* spelling marks: a two-row zigzag under the word */
td u {
  text-decoration: none;
  background:
    linear-gradient(90deg, #e5484d 50%, transparent 50%) 0 calc(100% - 1px) / 4px 1px repeat-x,
    linear-gradient(90deg, transparent 50%, #e5484d 50%) 0 100% / 4px 1px repeat-x;
}

.vscroll { width: 9px; padding: 4px 2px; background: #cecece; border-top: 2px solid #777; }
.vscroll .thumb { display: block; height: 26%; border-radius: 3px; background: #808080; }
.hscroll { display: flex; justify-content: space-between; height: 10px; margin-right: 9px; padding: 2px 1px 2px 2px; background: #cecece; }
.hscroll .thumb { width: 46%; border-radius: 3px; background: #808080; }
.hscroll .grip { width: 2px; background: #666; }

.tabs { display: flex; height: 17px; padding-left: 5px; font-size: 8px; }
.tabnav { width: 62px; height: 12px; margin-top: 2px; stroke: #d0cecb; }
.addtab { width: 25px; padding: 1px 0 0 7px; }
.addtab svg { width: 14px; height: 14px; }
.tab { height: 15px; padding: 0 9px 0 10px; position: relative; }
.tab.current { padding: 0 8px; background: #fff; border-bottom: 2px solid #8f9589; font-weight: 700; color: #222; }
.tab:not(.current)::after { content: ""; position: absolute; right: 0; top: 4px; height: 8px; border-right: 1px solid #bbb; }

.sidebar { position: relative; width: 38px; display: flex; flex-direction: column; }
.sidebar button { height: 29px; display: flex; align-items: center; justify-content: center; }
.sidebar svg { width: 16px; height: 16px; }
.sidebar .handle { position: absolute; left: -1px; top: 50%; width: 4px; height: 50px; margin-top: -25px; background: #999; }
.handle::before { content: ""; border: 2px solid transparent; border-left: 3px solid #fff; border-right: 0; }

/* status */
.status { display: grid; grid-template-columns: 181fr 220fr 196fr 171fr 47fr 30fr 20fr 20fr 186fr 96fr 33fr; height: 16px; border-top: 1px solid #cfcdcb; font-size: 8px; }
.cell { min-width: 0; display: flex; align-items: center; padding-left: 6px; margin: 1px 0; border-right: 1px solid #e3e1df; white-space: nowrap; }
.cell:last-child { border-right: 0; }
.cell.first svg { width: 12px; height: 12px; margin-right: 9px; }
.cell.mid { justify-content: center; padding: 0; }
.cell.percent { font-size: 9px; padding-right: 2px; }
.mode { width: 19px; height: 12px; }
.zoom button { width: 8px; flex: none; }
.zoom svg { width: 8px; height: 8px; }
.zoom input { appearance: none; flex: 1; min-width: 0; height: 12px; margin: 0 3px; background: linear-gradient(#aaa, #aaa) center / 100% 1px no-repeat; }
.zoom input::-webkit-slider-thumb { appearance: none; width: 3px; height: 7px; border: 1px solid #555; background: #f6f5f4; }
.cell.zoom { padding: 0 3px 0 5px; }
```
